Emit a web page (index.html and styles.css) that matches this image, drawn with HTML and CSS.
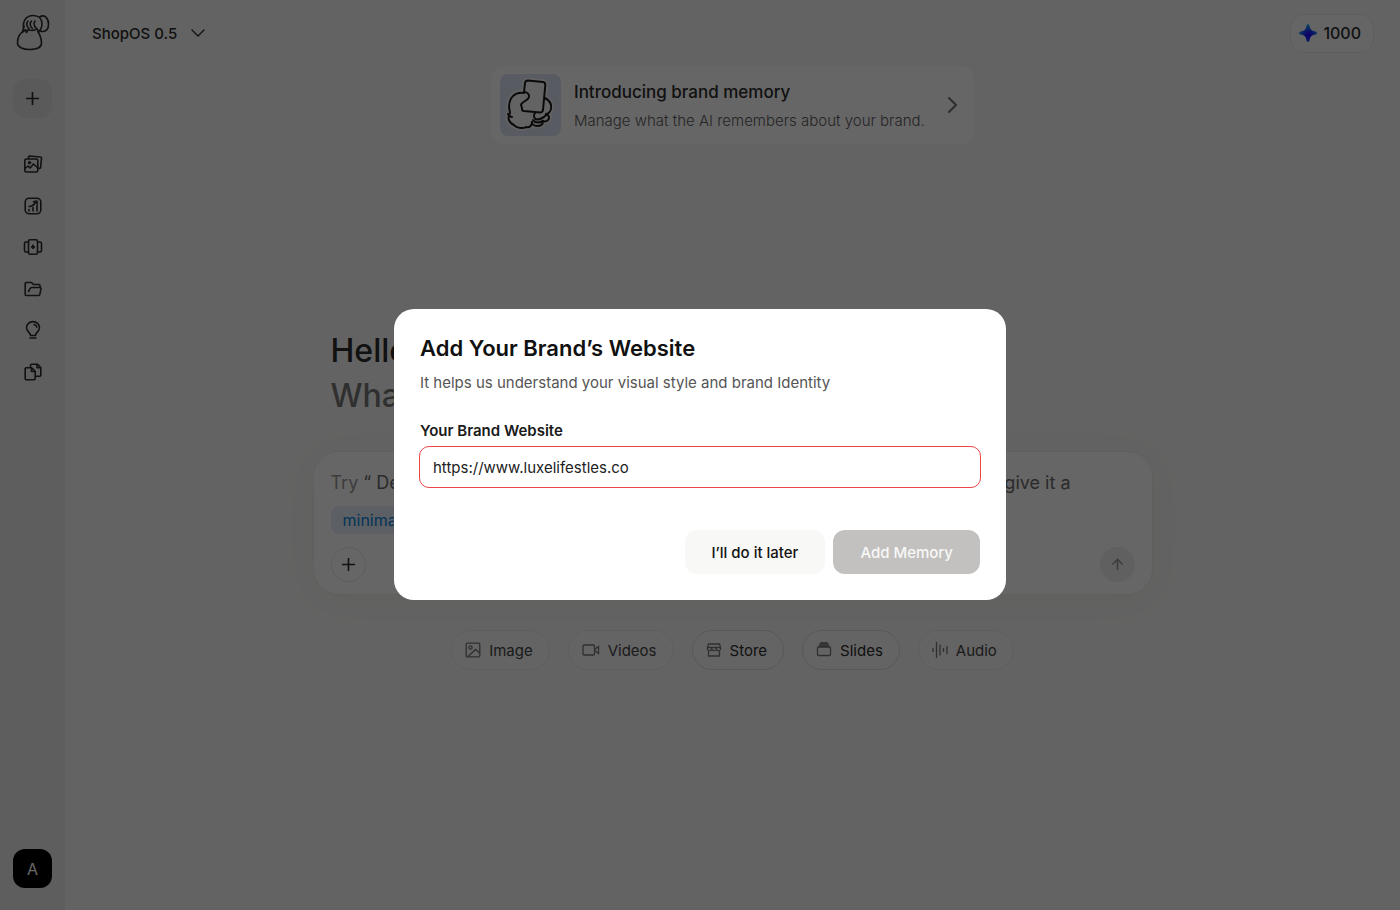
FILE: index.html
```html
<!DOCTYPE html>
<html lang="en">
<head>
<meta charset="UTF-8">
<title>ShopOS</title>
<meta name="viewport" content="width=device-width, initial-scale=1">
<link rel="stylesheet" href="styles.css">
</head>
<body>
<div class="app">
    <aside class="sidebar">
        <a class="logo" href="#" aria-label="ShopOS">
            <svg width="34" height="38" viewBox="0 0 34 38" fill="none" stroke="currentColor" stroke-width="1.6" stroke-linecap="round" stroke-linejoin="round">
                <path d="M8 17C4 19 1.500 24 1.500 29c0 4 5 6.500 12 6.500s12-2 12-6.500c0-4-1.500-8-3.500-11.500"/>
                <path d="M7.500 14C6.500 6 11 1.500 17 1.500S26 5 26 9.500c0 4-1.500 6.500-3.500 8"/>
                <path d="M23.500 3c5-3 9 1 9 7 0 5-2.500 7.500-6 7.500-1.300 0-2-.3-2.500-.5"/>
                <path d="M8 12l-1.500 6 3-2.500 1 3 2.500-4M12 7c-2 2-1.500 6 1 7.500M15.500 7c-2 2-1.500 6 1 7.500M19 7c-1.500 2-1.200 5 .8 6.500M12.500 15.500c3 1.500 6.500 1 8.500-1l1.500 4"/>
            </svg>
        </a>
        <button class="new-btn" aria-label="New">
            <svg width="15" height="15" viewBox="0 0 15 15" stroke="currentColor" stroke-width="1.7"><path d="M7.500 1v13M1 7.500h13"/></svg>
        </button>
        <nav class="side-nav">
            <a href="#" aria-label="Gallery">
                <svg viewBox="0 0 20 20"><path d="M5.500 4L6 2l11.500 1a1 1 0 0 1 1 1.200l-.9 9.300a1 1 0 0 1-1.100.9h-1"/><rect x="1.800" y="5" width="13" height="13" rx="1.500"/><path d="M2 14.500l3-2.500 2 2 3.500-4 4 3.500"/><circle class="dot" cx="6.500" cy="8.700" r="1.300"/></svg>
            </a>
            <a href="#" aria-label="Analytics">
                <svg viewBox="0 0 20 20"><rect x="2.200" y="2.200" width="15.600" height="15.600" rx="4"/><path d="M6 15v-1.500M10 15v-3.500M14 15V9.500M6 10.500c3 0 5-1.500 7-4.500M10.500 5.800L13.800 5l.6 3"/></svg>
            </a>
            <a href="#" aria-label="Carousel">
                <svg viewBox="0 0 20 20"><rect x="5.500" y="2.800" width="9" height="14.400" rx="1.500"/><path d="M5.500 5H3a1.500 1.500 0 0 0-1.500 1.500v7A1.500 1.500 0 0 0 3 15h2.500M14.500 5H17a1.500 1.500 0 0 1 1.500 1.500v7A1.500 1.500 0 0 1 17 15h-2.500"/><path class="dot" d="M10 8l.7 1.300 1.300.7-1.300.7L10 12l-.7-1.300L8 10l1.300-.7z"/></svg>
            </a>
            <a href="#" aria-label="Projects">
                <svg viewBox="0 0 20 20"><path d="M17 8V6.500a1 1 0 0 0-1-1h-5.500L8.500 3.500H3.200a1 1 0 0 0-1 1v11a1 1 0 0 0 1 1h12.600a1 1 0 0 0 1-.8l1.200-6a1 1 0 0 0-1-1.200H8.800a2 2 0 0 0-1.800 1.200L5.500 12.500"/></svg>
            </a>
            <a href="#" aria-label="Ideas">
                <svg viewBox="0 0 20 20"><path d="M7.500 15.500C7.500 12.500 3.500 11.500 3.500 7.800a6.500 6.200 0 0 1 13 0c0 3.700-4 4.700-4 7.700zM7 18h6M11 4.500c1.500.3 2.500 1.200 2.800 2.700"/></svg>
            </a>
            <a href="#" aria-label="Documents">
                <svg viewBox="0 0 20 20"><path d="M2.200 6.700a1 1 0 0 1 1-1h5.500l3.500 3.500v7.600a1 1 0 0 1-1 1h-8a1 1 0 0 1-1-1zM8.500 6v3.500H12M7.500 5.500V3.200a1 1 0 0 1 1-1h5.800L17.800 5.500v7.800a1 1 0 0 1-1 1h-4.500M14 2.500v3.300h3.500"/></svg>
            </a>
        </nav>
        <button class="avatar">A</button>
    </aside>
    <main class="main">
        <header class="top-bar">
            <button class="version-btn">ShopOS 0.5
                <svg width="16" height="16" viewBox="0 0 16 16" fill="none" stroke="currentColor" stroke-width="1.400" stroke-linecap="round" stroke-linejoin="round"><path d="M2 5l6 6 6-6"/></svg>
            </button>
            <button class="credits">
                <svg width="18" height="18" viewBox="0 0 18 18">
                    <defs><radialGradient id="spark" cx=".55" cy=".62" r=".6"><stop offset="0" stop-color="#2400ff"/><stop offset=".4" stop-color="#1a30ff"/><stop offset="1" stop-color="#2bb4e8"/></radialGradient></defs>
                    <path fill="url(#spark)" d="M9 0c1 0 1.500 1 1.800 2.500.6 3 1.700 4.100 4.700 4.700C17 7.500 18 8 18 9s-1 1.500-2.500 1.800c-3 .6-4.100 1.700-4.700 4.700C10.500 17 10 18 9 18s-1.500-1-1.800-2.500c-.6-3-1.700-4.100-4.700-4.700C1 10.500 0 10 0 9s1-1.500 2.500-1.800c3-.6 4.100-1.700 4.700-4.700C7.500 1 8 0 9 0z"/>
                </svg>
                1000
            </button>
        </header>
        <a class="banner" href="#">
            <span class="banner-art">
                <svg width="61" height="62" viewBox="0 0 61 62" fill="none" stroke-linecap="round" stroke-linejoin="round">
                    <defs>
                        <g id="hand">
                            <path d="M24 19C15 17 9 24 9 33l1 6c-3 5-1 10 4 12 2 3 9 4 12 2 4 1 6-2 6-5"/>
                            <path d="M8 40c1 2 2 3 4 3"/>
                            <path d="M24 18l1-9q.3-2.500 3-2.500L43 8q2.500.3 2.300 3L43 36q-.3 2.500-3 2.500L24 37q-2.500-.3-2-3l-1-3c1-4 7-4 8-8 .5-3-2-5-5-5"/>
                            <path d="M45 24c4 2 7 6 6 11-1 3-3 5-5 5 3 1 4 4 2 6-2 2-3 2-5 1 0 4-3 5-6 5-3 0-5-2-5-4"/>
                            <path d="M35 39c-2 3-1 6 2 6.500 4 0 7-2 10-5.500M33 46c2 3 6 3 10 1"/>
                        </g>
                    </defs>
                    <use href="#hand" class="halo"/>
                    <use href="#hand" class="ink"/>
                </svg>
            </span>
            <span class="banner-text">
                <strong>Introducing brand memory</strong>
                <span>Manage what the AI remembers about your brand.</span>
            </span>
            <svg class="banner-arrow" width="18" height="18" viewBox="0 0 18 18" fill="none" stroke="currentColor" stroke-width="2.200" stroke-linecap="round" stroke-linejoin="round"><path d="M5 2l7 7-7 7"/></svg>
        </a>
        <section class="hero">
            <h1>Hello there<span>What can I create for you?</span></h1>
            <div class="composer">
                <p class="prompt">
                    <span><i>Try</i> “ Describe a product, pick a look and</span>
                    <span>give it a</span>
                </p>
                <span class="tag">minimal style</span>
                <div class="composer-actions">
                    <button class="round-btn" aria-label="Attach">
                        <svg width="13" height="13" viewBox="0 0 13 13" stroke="currentColor" stroke-width="1.600"><path d="M6.500 0v13M0 6.500h13"/></svg>
                    </button>
                    <button class="round-btn send" aria-label="Send">
                        <svg width="13" height="13" viewBox="0 0 14 14" fill="none" stroke="currentColor" stroke-width="1.700"><path d="M7 13V2M1.500 7L7 1.500 12.500 7"/></svg>
                    </button>
                </div>
            </div>
            <div class="chips">
                <button class="chip soft">
                    <svg viewBox="0 0 16 16"><rect x="1.200" y="1.200" width="13.600" height="13.600" rx="1"/><circle cx="5.500" cy="5.500" r="1.600"/><path d="M3 14.500l7.500-7 4 3.500"/></svg>
                    Image
                </button>
                <button class="chip soft">
                    <svg class="wide" viewBox="0 0 18 16"><rect x="1" y="3" width="11.500" height="10" rx="1"/><path d="M12.500 7.500l4-3v7l-4-3"/></svg>
                    Videos
                </button>
                <button class="chip">
                    <svg viewBox="0 0 16 16"><path d="M2.500 2h11l1 3.500v2c-1 1.500-3 1.500-4.200 0-1 1.500-3.500 1.500-4.600 0-1.200 1.500-3.200 1.500-4.200 0v-2zM1.500 5.500h13M5.700 5.500v2M10.300 5.500v2M2.500 9v5h11V9"/></svg>
                    Store
                </button>
                <button class="chip">
                    <svg viewBox="0 0 16 16"><path class="solid" d="M4.500 0h7L14 5H2z"/><rect x="1.500" y="5" width="13" height="8.500" rx="1"/></svg>
                    Slides
                </button>
                <button class="chip soft">
                    <svg viewBox="0 0 16 16"><path d="M1 6v4M4.500 0v16M8 2.500v11M11.500 6v4M15 4v8"/></svg>
                    Audio
                </button>
            </div>
        </section>
    </main>
</div>
<div class="overlay">
    <form class="modal" role="dialog" aria-labelledby="modal-title">
        <h2 id="modal-title">Add Your Brand’s Website</h2>
        <p>It helps us understand your visual style and brand Identity</p>
        <label for="website">Your Brand Website</label>
        <input type="text" id="website" value="https://www.luxelifestles.co" spellcheck="false">
        <div class="modal-actions">
            <button type="button" class="btn">I’ll do it later</button>
            <button type="submit" class="btn primary" disabled>Add Memory</button>
        </div>
    </form>
</div>
</body>
</html>
```
FILE: styles.css
```css
* { box-sizing: border-box; }
body {
    margin: 0;
    background: #f8f8f8;
    color: #2c2c2c;
    font-family: Inter, "Liberation Sans", sans-serif;
}
button {
    padding: 0;
    border: none;
    background: none;
    color: inherit;
    font: inherit;
    cursor: pointer;
}
a { color: inherit; text-decoration: none; }
svg { flex: none; display: block; }

.app { display: flex; min-height: 100vh; }

/* sidebar */
.sidebar {
    width: 65px;
    flex: none;
    display: flex;
    flex-direction: column;
    align-items: center;
    padding: 14px 0 22px;
    background: #ebebeb;
}
.logo { margin-bottom: 27px; }
.new-btn, .avatar {
    display: flex;
    align-items: center;
    justify-content: center;
    width: 39px;
    height: 39px;
    border-radius: 12px;
}
.new-btn { background: #e2e2e2; }
.side-nav {
    display: flex;
    flex-direction: column;
    justify-content: space-between;
    height: 232px;
    margin-top: 34px;
}
.side-nav a {
    display: flex;
    align-items: center;
    justify-content: center;
    width: 25px;
    height: 24px;
}
.side-nav svg {
    width: 20px;
    height: 20px;
    fill: none;
    stroke: currentColor;
    stroke-width: 1.6;
    stroke-linecap: round;
    stroke-linejoin: round;
}
.side-nav .dot { fill: currentColor; stroke-width: 1; }
.avatar {
    margin-top: auto;
    background: #000;
    color: #fff;
    font-size: 16px;
}

/* main column */
.main {
    flex: 1;
    display: flex;
    flex-direction: column;
    align-items: center;
    min-width: 0;
}
.top-bar {
    display: flex;
    align-items: center;
    justify-content: space-between;
    width: 100%;
    height: 66px;
    padding: 0 26px 0 27px;
}
.version-btn {
    display: flex;
    align-items: center;
    gap: 13px;
    font-size: 15px;
    font-weight: 500;
}
.credits {
    display: flex;
    align-items: center;
    gap: 6px;
    height: 39px;
    padding: 0 12px 0 8px;
    border: 1px solid #ececec;
    border-radius: 14px;
    background: #fdfdfd;
    font-size: 16px;
    font-weight: 500;
}
.banner {
    display: flex;
    align-items: center;
    width: 483px;
    max-width: 100%;
    padding: 8px 12px 8px 9px;
    border-radius: 14px;
    background: #fff;
}
.banner-art {
    border-radius: 8px;
    background: #dde6f6;
    overflow: hidden;
}
.banner-art .halo { fill: #f8f8f8; stroke: #f8f8f8; stroke-width: 5; }
.banner-art .ink { stroke: #1a1a1a; stroke-width: 2; }
.banner-text {
    flex: 1;
    display: flex;
    flex-direction: column;
    gap: 6px;
    margin: 2px 0 0 13px;
}
.banner-text strong { font-size: 17px; line-height: 24px; font-weight: 500; }
.banner-text span { font-size: 15px; line-height: 22px; font-weight: 300; color: #5c5c5c; }
.banner-arrow { color: #777; }

.hero { width: 840px; max-width: 100%; margin-top: 180px; }
h1 {
    margin: 4px 18px 33px;
    font-size: 32px;
    line-height: 45px;
    font-weight: 500;
}
h1 span { display: block; color: #777; }
.composer {
    padding: 18px 17px 12px;
    border: 1px solid #eeeeea;
    border-radius: 26px;
    background: #fff;
    box-shadow: 0 4px 40px rgba(140, 130, 70, 0.08);
}
.prompt {
    display: flex;
    justify-content: space-between;
    margin: 0 64px 11px 0;
    font-size: 18px;
    line-height: 25px;
    color: #6b6b6b;
}
.prompt i { font-style: normal; color: #999; }
.tag {
    display: inline-block;
    padding: 0 12px;
    border-radius: 8px;
    background: #e6eef9;
    color: #0a84e0;
    font-size: 16px;
    line-height: 28px;
}
.composer-actions {
    display: flex;
    justify-content: space-between;
    margin-top: 13px;
}
.round-btn {
    display: flex;
    align-items: center;
    justify-content: center;
    width: 35px;
    height: 35px;
    border: 1px solid #e8e8e8;
    border-radius: 50%;
}
.send { border: none; background: #f0f0f0; color: #999; }

.chips {
    display: flex;
    flex-wrap: wrap;
    justify-content: center;
    gap: 18px;
    margin-top: 35px;
}
.chip {
    display: flex;
    align-items: center;
    gap: 8px;
    height: 40px;
    padding: 0 16px 0 13px;
    border: 1px solid #dcdcdc;
    border-radius: 20px;
    background: #fafafa;
    font-size: 15px;
}
.chip.soft { border-color: #ececec; color: #444; }
.chip svg {
    width: 16px;
    height: 16px;
    fill: none;
    stroke: #777;
    stroke-width: 1.3;
}
.chip .wide { width: 18px; }
.chip .solid { fill: #888; stroke: none; }

/* modal */
.overlay {
    position: fixed;
    inset: 0;
    display: flex;
    align-items: center;
    justify-content: center;
    padding-bottom: 1px;
    background: rgba(0, 0, 0, 0.6);
}
.modal {
    display: flex;
    flex-direction: column;
    width: 612px;
    max-width: 96vw;
    padding: 25px;
    border-radius: 20px;
    background: #fff;
}
.modal h2 {
    margin: 0 1px 10px;
    color: #111;
    font-size: 22px;
    line-height: 28px;
    font-weight: 600;
}
.modal p {
    margin: 0 1px 27px;
    color: #555;
    font-size: 15px;
    line-height: 22px;
}
.modal label {
    margin: 0 1px 5px;
    color: #1a1a1a;
    font-size: 15px;
    line-height: 20px;
    font-weight: 600;
}
.modal input {
    height: 42px;
    padding: 0 13px;
    border: 1px solid #ef4444;
    border-radius: 10px;
    outline: none;
    background: #fff;
    color: #222;
    font: inherit;
    font-size: 15px;
}
.modal-actions {
    display: flex;
    justify-content: flex-end;
    gap: 8px;
    margin: 42px 1px 1px;
}
.btn {
    height: 44px;
    padding: 0 27px;
    border-radius: 12px;
    background: #f8f8f7;
    color: #111;
    font-size: 15px;
    font-weight: 500;
}
.btn.primary { background: #c2c1bf; color: #f8f8f7; cursor: default; }
```
